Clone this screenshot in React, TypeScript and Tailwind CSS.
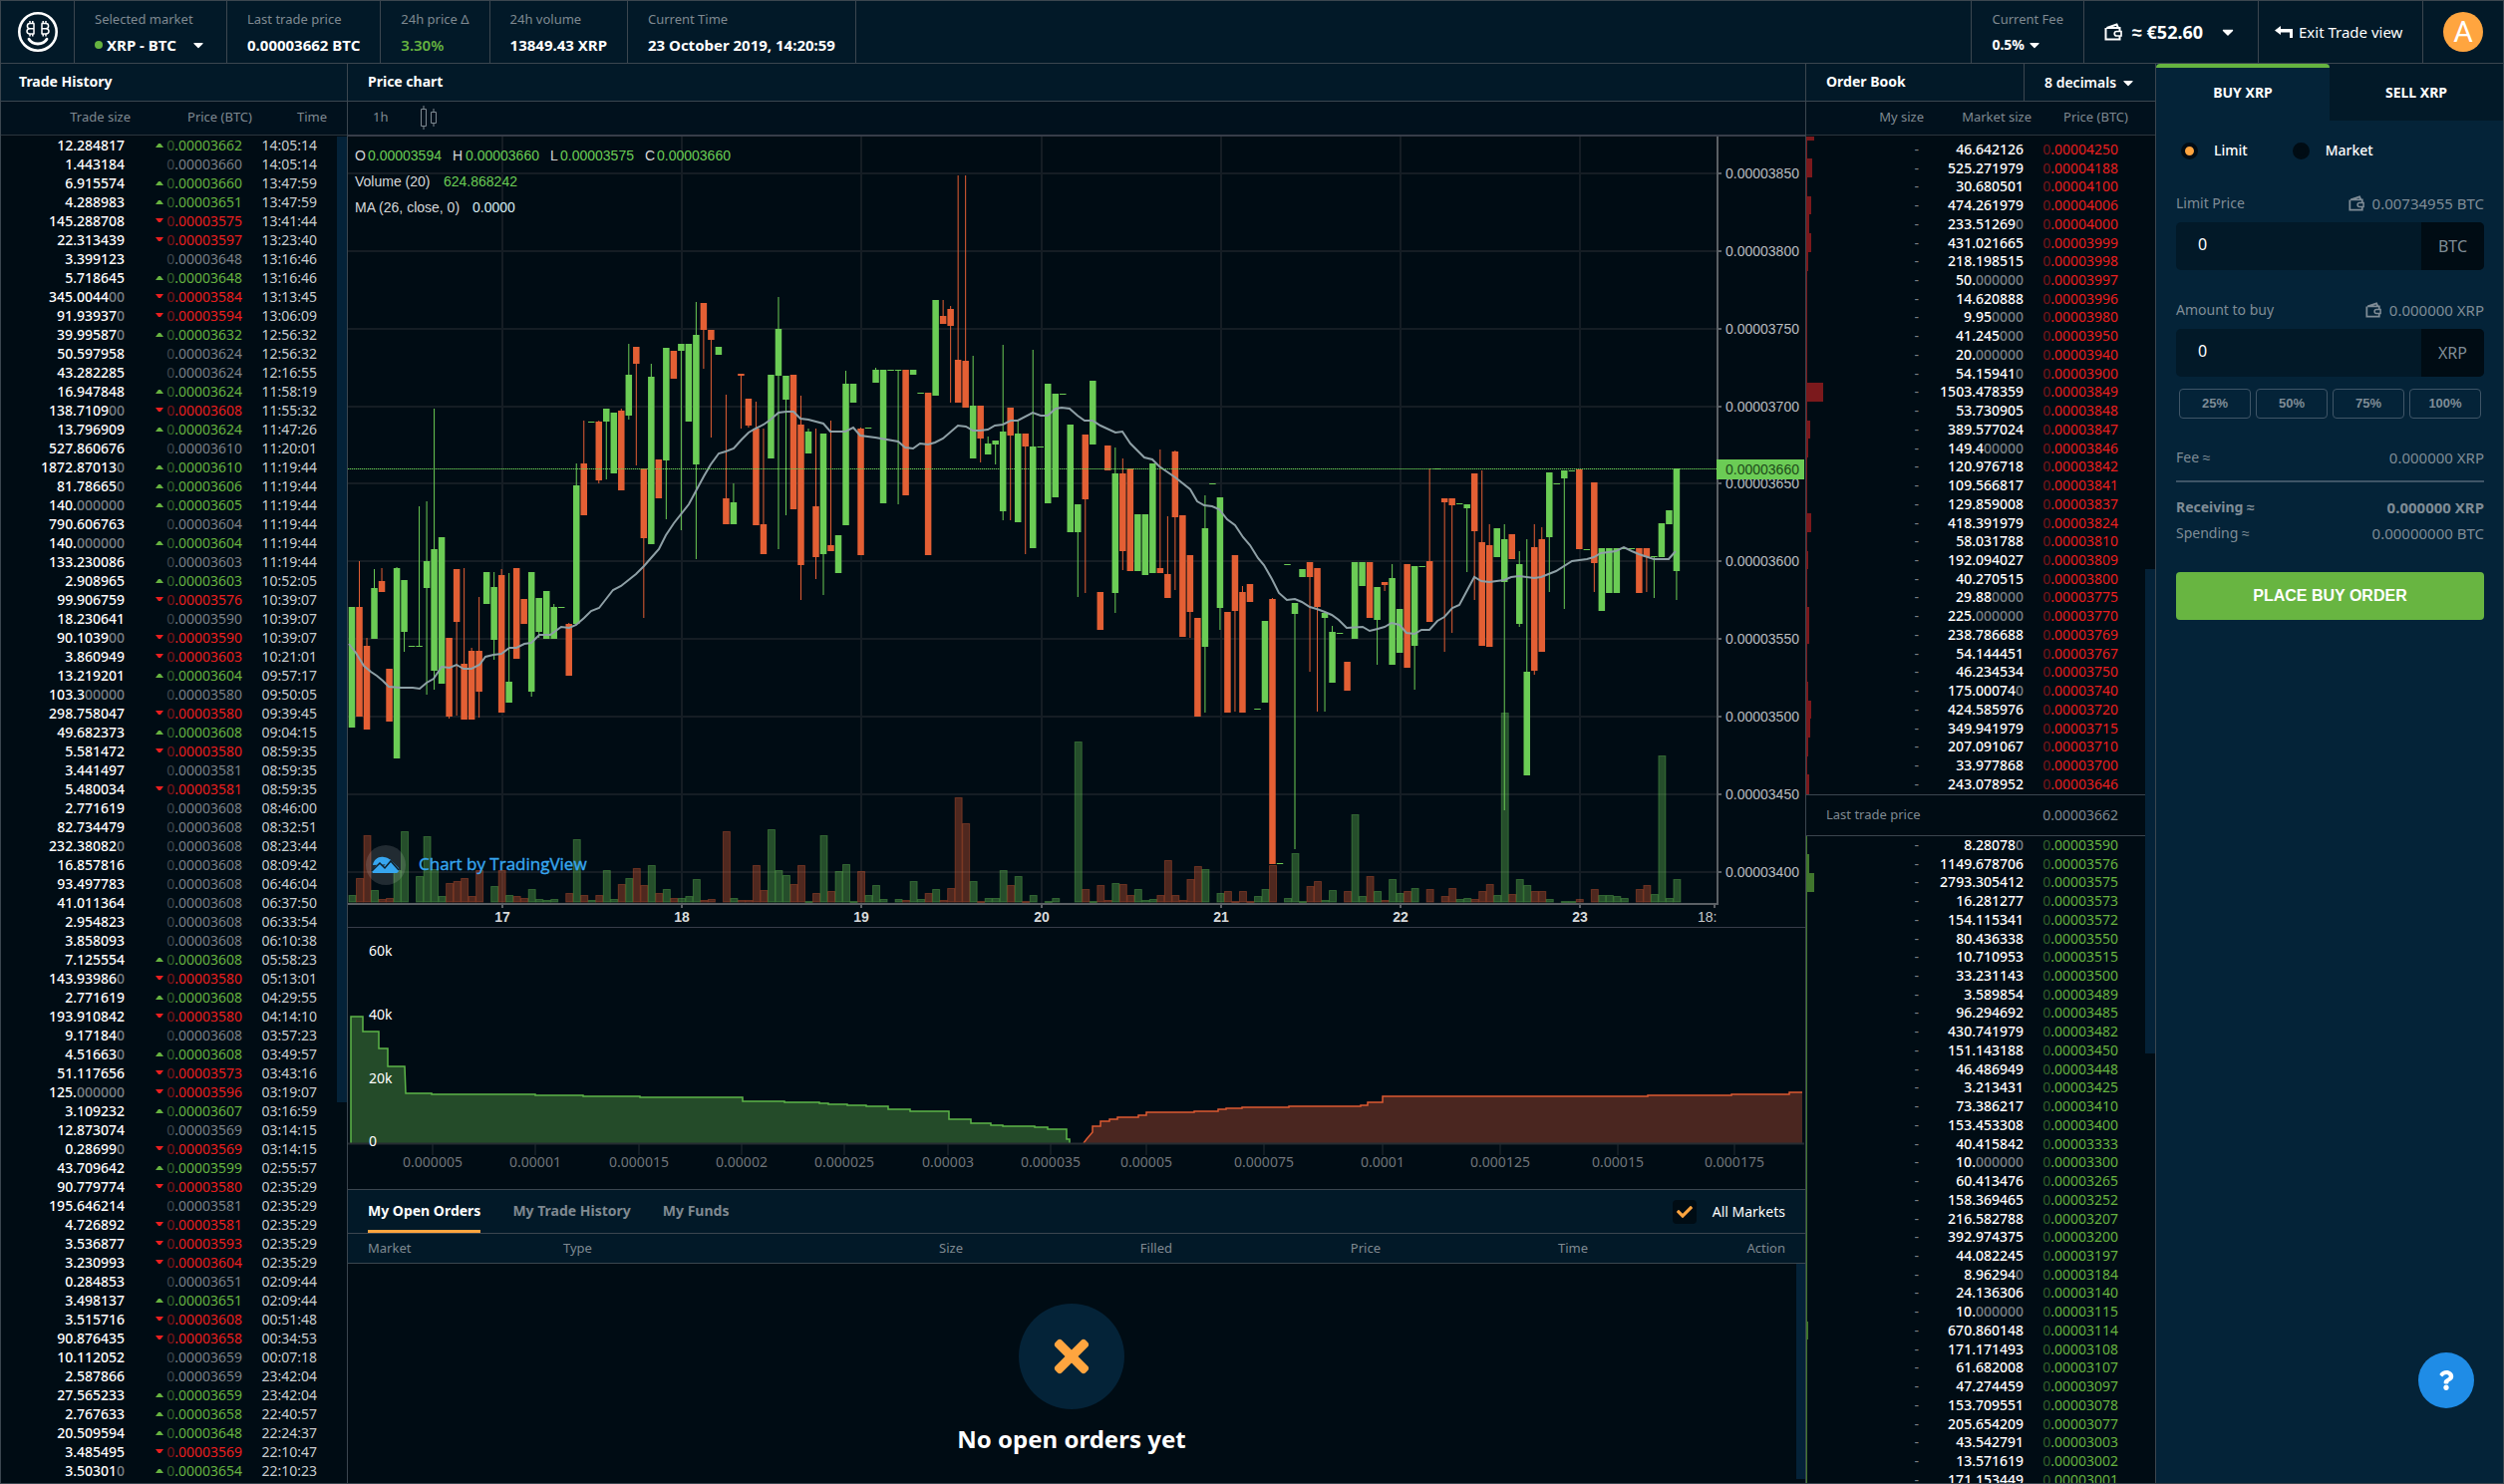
import { FaCaretDown, FaCheck, FaQuestion, FaTimes } from 'react-icons/fa';

type Direction = 'up' | 'down' | 'same';

// size, last digits of the price, time, direction
const trades: [string, string, string, Direction][] = [
  ['12.284817', '3662', '14:05:14', 'up'],
  ['1.443184', '3660', '14:05:14', 'same'],
  ['6.915574', '3660', '13:47:59', 'up'],
  ['4.288983', '3651', '13:47:59', 'up'],
  ['145.288708', '3575', '13:41:44', 'down'],
  ['22.313439', '3597', '13:23:40', 'down'],
  ['3.399123', '3648', '13:16:46', 'same'],
  ['5.718645', '3648', '13:16:46', 'up'],
  ['345.004400', '3584', '13:13:45', 'down'],
  ['91.939370', '3594', '13:06:09', 'down'],
  ['39.995870', '3632', '12:56:32', 'up'],
  ['50.597958', '3624', '12:56:32', 'same'],
  ['43.282285', '3624', '12:16:55', 'same'],
  ['16.947848', '3624', '11:58:19', 'up'],
  ['138.710900', '3608', '11:55:32', 'down'],
  ['13.796909', '3624', '11:47:26', 'up'],
  ['527.860676', '3610', '11:20:01', 'same'],
  ['1872.870130', '3610', '11:19:44', 'up'],
  ['81.786650', '3606', '11:19:44', 'up'],
  ['140.000000', '3605', '11:19:44', 'up'],
  ['790.606763', '3604', '11:19:44', 'same'],
  ['140.000000', '3604', '11:19:44', 'up'],
  ['133.230086', '3603', '11:19:44', 'same'],
  ['2.908965', '3603', '10:52:05', 'up'],
  ['99.906759', '3576', '10:39:07', 'down'],
  ['18.230641', '3590', '10:39:07', 'same'],
  ['90.103900', '3590', '10:39:07', 'down'],
  ['3.860949', '3603', '10:21:01', 'down'],
  ['13.219201', '3604', '09:57:17', 'up'],
  ['103.300000', '3580', '09:50:05', 'same'],
  ['298.758047', '3580', '09:39:45', 'down'],
  ['49.682373', '3608', '09:04:15', 'up'],
  ['5.581472', '3580', '08:59:35', 'down'],
  ['3.441497', '3581', '08:59:35', 'same'],
  ['5.480034', '3581', '08:59:35', 'down'],
  ['2.771619', '3608', '08:46:00', 'same'],
  ['82.734479', '3608', '08:32:51', 'same'],
  ['232.380820', '3608', '08:23:44', 'same'],
  ['16.857816', '3608', '08:09:42', 'same'],
  ['93.497783', '3608', '06:46:04', 'same'],
  ['41.011364', '3608', '06:37:50', 'same'],
  ['2.954823', '3608', '06:33:54', 'same'],
  ['3.858093', '3608', '06:10:38', 'same'],
  ['7.125554', '3608', '05:58:23', 'up'],
  ['143.939860', '3580', '05:13:01', 'down'],
  ['2.771619', '3608', '04:29:55', 'up'],
  ['193.910842', '3580', '04:14:10', 'down'],
  ['9.171840', '3608', '03:57:23', 'same'],
  ['4.516630', '3608', '03:49:57', 'up'],
  ['51.117656', '3573', '03:43:16', 'down'],
  ['125.000000', '3596', '03:19:07', 'down'],
  ['3.109232', '3607', '03:16:59', 'up'],
  ['12.873074', '3569', '03:14:15', 'same'],
  ['0.286990', '3569', '03:14:15', 'down'],
  ['43.709642', '3599', '02:55:57', 'up'],
  ['90.779774', '3580', '02:35:29', 'down'],
  ['195.646214', '3581', '02:35:29', 'same'],
  ['4.726892', '3581', '02:35:29', 'down'],
  ['3.536877', '3593', '02:35:29', 'down'],
  ['3.230993', '3604', '02:35:29', 'down'],
  ['0.284853', '3651', '02:09:44', 'same'],
  ['3.498137', '3651', '02:09:44', 'up'],
  ['3.515716', '3608', '00:51:48', 'down'],
  ['90.876435', '3658', '00:34:53', 'down'],
  ['10.112052', '3659', '00:07:18', 'same'],
  ['2.587866', '3659', '23:42:04', 'same'],
  ['27.565233', '3659', '23:42:04', 'up'],
  ['2.767633', '3658', '22:40:57', 'up'],
  ['20.509594', '3648', '22:24:37', 'up'],
  ['3.485495', '3569', '22:10:47', 'down'],
  ['3.503010', '3654', '22:10:23', 'up'],
];

const asks: [string, string][] = [
  ['46.642126', '4250'], ['525.271979', '4188'], ['30.680501', '4100'], ['474.261979', '4006'],
  ['233.512690', '4000'], ['431.021665', '3999'], ['218.198515', '3998'], ['50.000000', '3997'],
  ['14.620888', '3996'], ['9.950000', '3980'], ['41.245000', '3950'], ['20.000000', '3940'],
  ['54.159410', '3900'], ['1503.478359', '3849'], ['53.730905', '3848'], ['389.577024', '3847'],
  ['149.400000', '3846'], ['120.976718', '3842'], ['109.566817', '3841'], ['129.859008', '3837'],
  ['418.391979', '3824'], ['58.031788', '3810'], ['192.094027', '3809'], ['40.270515', '3800'],
  ['29.880000', '3775'], ['225.000000', '3770'], ['238.786688', '3769'], ['54.144451', '3767'],
  ['46.234534', '3750'], ['175.000740', '3740'], ['424.585976', '3720'], ['349.941979', '3715'],
  ['207.091067', '3710'], ['33.977868', '3700'], ['243.078952', '3646'],
];

const bids: [string, string][] = [
  ['8.280780', '3590'], ['1149.678706', '3576'], ['2793.305412', '3575'], ['16.281277', '3573'],
  ['154.115341', '3572'], ['80.436338', '3550'], ['10.710953', '3515'], ['33.231143', '3500'],
  ['3.589854', '3489'], ['96.294692', '3485'], ['430.741979', '3482'], ['151.143188', '3450'],
  ['46.486949', '3448'], ['3.213431', '3425'], ['73.386217', '3410'], ['153.453308', '3400'],
  ['40.415842', '3333'], ['10.000000', '3300'], ['60.413476', '3265'], ['158.369465', '3252'],
  ['216.582788', '3207'], ['392.974375', '3200'], ['44.082245', '3197'], ['8.962940', '3184'],
  ['24.136306', '3140'], ['10.000000', '3115'], ['670.860148', '3114'], ['171.171493', '3108'],
  ['61.682008', '3107'], ['47.274459', '3097'], ['153.709551', '3078'], ['205.654209', '3077'],
  ['43.542791', '3003'], ['13.571619', '3002'], ['171.153449', '3001'],
];

// One candle per hour: up (1) or down (0), high, body top, body bottom, low, volume top.
// A volume of 0 means nothing traded in that hour.
const candles: [number, number, number, number, number, number][] = [
  [1, 609, 609, 730, 730, 898], [0, 563, 609, 719, 719, 881], [0, 640, 648, 732, 732, 838],
  [1, 571, 590, 641, 641, 893], [0, 570, 583, 594, 594, 902], [0, 671, 671, 724, 724, 901],
  [1, 569, 570, 761, 761, 873], [1, 582, 582, 634, 654, 834], [1, 648, 648, 648, 648, 0],
  [1, 508, 648, 648, 648, 879], [1, 503, 563, 590, 697, 839], [1, 410, 551, 673, 692, 872],
  [1, 539, 539, 686, 686, 899], [0, 640, 640, 719, 721, 886], [0, 571, 571, 624, 718, 884],
  [0, 570, 666, 722, 722, 881], [0, 650, 653, 722, 722, 899], [0, 599, 653, 694, 720, 873],
  [1, 574, 574, 606, 606, 0], [1, 574, 589, 642, 662, 889], [0, 571, 577, 715, 715, 873],
  [1, 575, 684, 705, 705, 898], [0, 570, 570, 661, 661, 899], [0, 601, 601, 626, 626, 901],
  [1, 574, 574, 694, 699, 892], [1, 600, 600, 634, 640, 902], [1, 593, 593, 641, 641, 903],
  [1, 606, 609, 641, 641, 902], [1, 609, 609, 609, 609, 0], [0, 625, 626, 678, 678, 896],
  [1, 465, 487, 626, 626, 842], [0, 422, 465, 517, 517, 898], [1, 423, 423, 423, 423, 903],
  [0, 422, 423, 482, 485, 898], [1, 410, 410, 423, 481, 873], [1, 414, 414, 475, 475, 902],
  [0, 410, 412, 492, 492, 887], [1, 345, 376, 417, 421, 881], [0, 348, 348, 365, 467, 871],
  [0, 470, 470, 540, 620, 888], [1, 365, 378, 546, 546, 868], [0, 461, 461, 500, 500, 896],
  [1, 349, 349, 462, 521, 892], [0, 352, 352, 380, 380, 901], [1, 345, 345, 352, 532, 901],
  [1, 345, 345, 423, 423, 899], [1, 303, 336, 466, 561, 882], [0, 304, 304, 331, 370, 903],
  [0, 331, 331, 341, 439, 902], [1, 348, 348, 356, 356, 0], [0, 396, 500, 526, 526, 834],
  [1, 485, 504, 526, 526, 901], [0, 375, 375, 377, 430, 903], [0, 400, 400, 427, 429, 903],
  [0, 403, 430, 527, 527, 868], [0, 430, 526, 556, 556, 893], [1, 376, 376, 460, 460, 832],
  [1, 298, 330, 377, 551, 873], [1, 377, 377, 401, 517, 878], [0, 376, 376, 511, 511, 887],
  [0, 397, 426, 567, 602, 868], [1, 430, 433, 455, 455, 904], [0, 430, 508, 559, 581, 896],
  [1, 435, 435, 556, 597, 838], [0, 422, 547, 553, 553, 894], [1, 537, 537, 575, 575, 874],
  [1, 372, 385, 527, 527, 867], [1, 385, 385, 404, 404, 904], [0, 429, 430, 557, 557, 874],
  [1, 429, 429, 429, 429, 898], [1, 369, 371, 384, 384, 888], [1, 371, 371, 505, 505, 902],
  [1, 371, 371, 371, 371, 0], [1, 371, 371, 371, 506, 902], [0, 371, 371, 497, 497, 903],
  [1, 371, 371, 376, 376, 884], [1, 394, 394, 394, 394, 902], [0, 394, 394, 557, 557, 896],
  [1, 301, 301, 397, 397, 892], [0, 301, 317, 325, 325, 903], [0, 307, 310, 327, 404, 891],
  [0, 176, 361, 404, 404, 800], [0, 176, 362, 409, 409, 826], [1, 357, 407, 460, 460, 884],
  [0, 407, 407, 440, 464, 904], [1, 438, 445, 456, 456, 901], [1, 442, 442, 446, 466, 901],
  [1, 346, 433, 513, 522, 873], [0, 409, 409, 437, 522, 888], [1, 421, 435, 524, 524, 879],
  [0, 435, 435, 448, 556, 904], [1, 351, 448, 550, 550, 898], [1, 448, 448, 448, 448, 0],
  [1, 385, 385, 505, 505, 904], [1, 395, 395, 499, 499, 901], [1, 395, 395, 395, 395, 0],
  [1, 426, 426, 534, 534, 0], [1, 506, 506, 534, 599, 744], [0, 436, 436, 501, 595, 892],
  [1, 382, 382, 446, 446, 904], [0, 594, 594, 632, 632, 888], [0, 447, 447, 472, 472, 903],
  [1, 449, 475, 595, 615, 886], [0, 460, 475, 553, 572, 887], [0, 470, 470, 573, 573, 898],
  [1, 516, 516, 573, 573, 892], [1, 516, 516, 577, 577, 903], [1, 465, 465, 575, 575, 902],
  [0, 451, 570, 575, 575, 898], [0, 518, 576, 600, 600, 863], [0, 452, 453, 519, 592, 898],
  [0, 517, 517, 639, 639, 903], [0, 557, 557, 614, 640, 882], [0, 620, 620, 719, 719, 869],
  [1, 497, 530, 649, 715, 872], [1, 485, 485, 485, 485, 0], [1, 499, 499, 610, 632, 896],
  [0, 614, 614, 715, 715, 894], [0, 557, 557, 613, 714, 904], [0, 588, 594, 715, 715, 894],
  [0, 586, 586, 604, 604, 904], [1, 711, 711, 711, 711, 899], [1, 623, 623, 705, 705, 892],
  [0, 600, 601, 867, 867, 868], [1, 866, 866, 866, 866, 0], [1, 566, 566, 566, 566, 901],
  [1, 605, 605, 616, 852, 856], [1, 571, 571, 579, 579, 904], [0, 564, 564, 579, 674, 889],
  [0, 570, 570, 609, 714, 884], [1, 615, 615, 620, 714, 903], [1, 628, 634, 685, 685, 893],
  [1, 635, 635, 635, 635, 0], [0, 664, 664, 693, 693, 894], [1, 564, 564, 641, 641, 817],
  [1, 564, 564, 588, 588, 899], [0, 564, 564, 620, 620, 879], [1, 589, 589, 622, 667, 894],
  [0, 584, 584, 587, 593, 903], [1, 566, 580, 667, 667, 882], [1, 611, 611, 655, 655, 896],
  [0, 566, 566, 670, 670, 894], [1, 568, 568, 648, 692, 891], [1, 568, 568, 568, 568, 0],
  [0, 470, 563, 624, 624, 892], [1, 470, 470, 470, 470, 0], [0, 500, 500, 504, 654, 899],
  [0, 500, 500, 507, 635, 891], [1, 505, 505, 505, 505, 902], [1, 506, 506, 510, 574, 901],
  [0, 475, 475, 533, 602, 902], [0, 472, 544, 648, 648, 894], [0, 526, 547, 649, 649, 887],
  [1, 530, 530, 559, 559, 898], [1, 526, 541, 584, 813, 715], [0, 536, 536, 561, 561, 897],
  [1, 553, 566, 626, 629, 882], [1, 541, 674, 778, 778, 888], [0, 526, 549, 673, 677, 894],
  [0, 529, 541, 654, 654, 894], [1, 474, 474, 539, 594, 902], [1, 485, 485, 485, 485, 0],
  [1, 472, 472, 480, 611, 904], [1, 472, 472, 472, 472, 904], [0, 471, 471, 551, 551, 902],
  [1, 551, 551, 551, 551, 0], [0, 484, 484, 565, 594, 892], [1, 550, 550, 613, 613, 898],
  [1, 550, 550, 595, 595, 898], [1, 550, 550, 595, 595, 899], [1, 550, 550, 550, 550, 901],
  [1, 550, 550, 550, 550, 0], [0, 550, 550, 595, 595, 892], [0, 550, 550, 559, 594, 888],
  [1, 558, 558, 558, 600, 897], [1, 525, 525, 559, 559, 758], [1, 512, 512, 526, 526, 901],
  [1, 470, 470, 573, 602, 882],
];

const movingAverage =
  '350,646 353,650 357,655 365,668 372,674 378,678 384,683 390,689 402,690 414,690 421,691 428,685 435,681 443,669 451,670 458,667 465,671 473,671 481,667 487,659 495,657 503,656 511,650 518,650 526,646 533,645 541,637 552,637 563,629 571,630 578,627 586,620 593,613 601,610 608,601 615,592 623,588 638,576 646,568 653,560 661,551 668,537 676,525 691,506 706,478 713,466 721,455 728,453 736,450 744,441 751,434 758,430 766,426 773,421 781,414 789,413 796,413 803,420 811,421 826,425 833,433 848,433 856,429 863,437 878,439 901,443 908,449 916,450 923,445 931,446 938,444 946,440 961,427 969,428 976,432 983,432 991,431 998,427 1006,426 1014,422 1021,422 1036,414 1044,417 1051,417 1059,410 1065,409 1073,410 1081,417 1088,422 1096,422 1104,427 1119,434 1126,433 1134,445 1148,459 1156,461 1163,468 1179,479 1194,491 1201,503 1208,507 1216,508 1223,511 1231,521 1239,527 1247,539 1254,547 1262,560 1268,567 1276,581 1283,595 1291,602 1299,601 1306,604 1314,609 1321,611 1329,614 1336,617 1343,622 1351,630 1367,629 1374,633 1382,631 1389,629 1396,625 1404,627 1411,635 1419,636 1426,632 1434,632 1442,623 1449,619 1457,610 1464,607 1479,579 1486,583 1494,584 1509,582 1516,579 1524,578 1539,580 1546,579 1561,573 1577,563 1592,561 1599,559 1606,555 1621,553 1629,549 1637,553 1644,556 1659,561 1674,561 1681,553';

const priceTicks = [3850, 3800, 3750, 3700, 3650, 3600, 3550, 3500, 3450, 3400];
const dayTicks = [17, 18, 19, 20, 21, 22, 23];

const bidDepth =
  'M352 1147V1020H364V1035H380V1052H389V1070H406L407 1097H433V1098H537V1099H585V1100H642V1101H745V1105H787V1106H822V1107H831V1108H850V1109H869V1110H891V1113H913V1115H952V1123H974V1127H994V1129H1006V1130H1038V1131H1051V1133H1070V1143H1073V1147';
const askDepth =
  'M1087 1147L1090 1143L1096 1136V1130H1104V1125H1113V1123H1121V1121H1142V1119H1150V1116H1198V1115H1222V1113H1230V1112H1246V1111H1293V1110H1365V1109H1372V1106H1387V1100H1653V1099H1737V1098H1795V1096H1808';

const depthTicks: [number, string][] = [
  [434, '0.000005'], [537, '0.00001'], [641, '0.000015'], [744, '0.00002'], [847, '0.000025'],
  [951, '0.00003'], [1054, '0.000035'], [1150, '0.00005'], [1268, '0.000075'], [1387, '0.0001'],
  [1505, '0.000125'], [1623, '0.00015'], [1740, '0.000175'],
];

const directionColor = {
  up: 'text-[#66b340]',
  down: 'text-[#ea1f1f]',
  same: 'text-[#7a8086]',
};

const Size = ({ value }: { value: string }) => {
  const zeros = value.match(/0*$/)?.[0] ?? '';
  return (
    <>
      {value.slice(0, value.length - zeros.length)}
      <span className="text-[#7a8086]">{zeros}</span>
    </>
  );
};

const Price = ({ digits }: { digits: string }) => (
  <>
    <span className="opacity-50">0</span>.0000{digits}
  </>
);

const Logo = () => (
  <svg viewBox="0 0 42 42" className="h-[42px] w-[42px]" fill="none" stroke="#fff">
    <circle cx="21" cy="21" r="18.7" strokeWidth="2.6" />
    <path d="M12 28.300c2 3.400 5 4.700 9 4.700s7-1.300 9-4.700" strokeWidth="2.800" strokeLinecap="round" />
    <path
      d="M17 12.500v10.500M17.500 12.500h-4.500c-3.500 0-3.500 5.200 0 5.200h4M13 17.700c-4 0-4 5.300 0 5.300h4.500M13 10v2.500M15.800 10v2.500M13 23v2.500M15.800 23v2.500"
      strokeWidth="1.500"
    />
    <path
      d="M25 12.500v10.500M24.500 12.500h4.500c3.500 0 3.500 5.200 0 5.200h-4M29 17.700c4 0 4 5.300 0 5.300h-4.500M26.200 10v2.500M29 10v2.500M26.200 23v2.500M29 23v2.500"
      strokeWidth="1.500"
    />
  </svg>
);

const Wallet = ({ className }: { className: string }) => (
  <svg viewBox="0 0 18 18" className={className} fill="none" stroke="currentColor" strokeWidth="2">
    <path d="M15.500 8V5H2.500L12.500 1.500L14 5M15.500 13v3.500H1.500V5" />
    <path d="M17 8.500v4.500h-4.500a2.250 2.250 0 0 1 0-4.500z" strokeWidth="1.700" />
  </svg>
);

const Stat = ({ label, children }: { label: string; children: React.ReactNode }) => (
  <div className="flex flex-col justify-center gap-[6px] border-r border-[#3b464f] px-5 text-[15px] leading-5 font-bold">
    <span className="text-[13px] font-normal text-[#7f8991]">{label}</span>
    {children}
  </div>
);

const Header = () => (
  <header className="flex h-[63px] shrink-0 border-b border-[#3b464f] bg-[#021928]">
    <a href="#home" aria-label="Home" className="flex w-[74px] items-center justify-center border-r border-[#3b464f]">
      <Logo />
    </a>
    <Stat label="Selected market">
      <button type="button" className="flex w-28 items-center">
        <span className="mr-1 h-2 w-2 rounded-full bg-[#66b340]" />
        XRP - BTC
        <FaCaretDown className="ml-auto h-4 w-4" />
      </button>
    </Stat>
    <Stat label="Last trade price">
      <span>0.00003662 BTC</span>
    </Stat>
    <Stat label="24h price Δ">
      <span className="font-semibold text-[#66b340]">3.30%</span>
    </Stat>
    <Stat label="24h volume">
      <span>13849.43 XRP</span>
    </Stat>
    <Stat label="Current Time">
      <span>23 October 2019, 14:20:59</span>
    </Stat>
    <div className="ml-auto flex border-l border-[#3b464f]">
      <Stat label="Current Fee">
        <button type="button" className="flex items-center gap-[2px] text-sm leading-5">
          0.5%
          <FaCaretDown className="h-4 w-4" />
        </button>
      </Stat>
      <button
        type="button"
        className="flex w-[175px] items-center border-r border-[#3b464f] pl-5 text-lg font-bold"
      >
        <Wallet className="mr-[10px] h-[18px] w-[18px]" />≈ €52.60
        <FaCaretDown className="ml-4 h-[18px] w-[18px]" />
      </button>
      <a href="#exit" className="flex w-[165px] items-center gap-[6px] border-r border-[#3b464f] pl-4 text-[15px]">
        <svg viewBox="0 0 18 14" className="h-[14px] w-[18px]" fill="currentColor">
          <path d="M0 5.500L6 1v3h12v9h-3V7.500H6V10z" />
        </svg>
        Exit Trade view
      </a>
      <button
        type="button"
        aria-label="Account"
        className="mx-5 h-10 w-10 self-center rounded-full bg-[#ffa53f] font-['Roboto',sans-serif] text-[30px] leading-10"
      >
        A
      </button>
    </div>
  </header>
);

const TradeHistory = () => (
  <section className="relative overflow-hidden border-r border-[#3b464f]">
    <h2 className="flex h-[38px] items-center border-b border-[#3b464f] bg-[#021928] pb-[2px] pl-[18px] text-sm font-bold">
      Trade History
    </h2>
    <table className="w-full table-fixed text-right text-sm leading-[19px]">
      <colgroup>
        <col className="w-[130px]" />
        <col className="w-[122px]" />
        <col className="w-[75px]" />
        <col />
      </colgroup>
      <thead className="bg-[#01111d] text-[13px] text-[#7f8991]">
        <tr className="h-[33px] border-b border-[#2b353d] *:pb-[2px] *:font-normal">
          <th>Trade size</th>
          <th>Price (BTC)</th>
          <th>Time</th>
          <th />
        </tr>
      </thead>
      <tbody>
        {trades.map(([size, price, time, direction], i) => (
          <tr key={i} className="h-[19px]">
            <td className="pr-[6px] font-medium">
              <Size value={size} />
            </td>
            <td className={`pr-[10px] ${directionColor[direction]}`}>
              <div className="flex h-[19px] items-center justify-end gap-[3px]">
                {direction !== 'same' && (
                  <svg viewBox="0 0 8 5" className="h-[5px] w-2" fill="currentColor">
                    <path d={direction === 'up' ? 'M0 5L3 1h2l3 4z' : 'M0 0h8L5 4H3z'} />
                  </svg>
                )}
                <span>
                  <Price digits={price} />
                </span>
              </div>
            </td>
            <td className="pr-[10px] text-[#c8cccf]">{time}</td>
            <td />
          </tr>
        ))}
      </tbody>
    </table>
    <div className="absolute top-[73px] right-0 h-[969px] w-[10px] bg-[#042238]" />
  </section>
);

const PriceChart = () => {
  const candleX = (i: number) => 353 + i * 7.508;
  const priceY = (price: number) => Math.round(174 + (3850 - price) * 1.557);

  return (
    <svg
      viewBox="349 137 1462 793"
      className="block w-full shrink-0 border-b border-[#373d49] font-['Liberation_Sans',Arial,sans-serif] text-sm"
    >
      <g stroke="#151d24" strokeWidth="2">
        {priceTicks.map((price) => (
          <path key={price} d={`M349 ${priceY(price)}H1722`} />
        ))}
        {dayTicks.map((day, i) => (
          <path key={day} d={`M${Math.round(504 + i * 180.2)} 137V906`} />
        ))}
      </g>

      {candles.map(([up, high, top, bottom, low], i) => {
        const x = candleX(i);
        const color = up ? '#6bcc55' : '#e35f34';
        return (
          <g key={i} fill={color}>
            {low > high && <rect x={x - 0.5} y={high} width="1" height={low - high} />}
            <rect x={x - 3.25} y={top} width="6.5" height={Math.max(1, bottom - top)} />
          </g>
        );
      })}

      <polyline points={movingAverage} fill="none" stroke="#8ea0a6" strokeWidth="2" />

      {candles.map(([up, , , , , volume], i) => {
        if (!volume) return null;
        const color = up ? '#6bcc55' : '#e35f34';
        return (
          <rect
            key={i}
            x={candleX(i) - 3}
            y={volume + 0.5}
            width="7"
            height={Math.max(1, 904.5 - volume)}
            fill={color}
            fillOpacity="0.35"
            stroke={color}
            strokeOpacity="0.35"
          />
        );
      })}

      <path d="M349 470.5H1722" stroke="#6bcc55" strokeOpacity="0.3" />
      <path d="M349 470.5H1722" stroke="#6bcc55" strokeDasharray="1 1" />

      <g stroke="#5b6065" strokeWidth="2">
        <path d="M349 907H1723V137" fill="none" />
        {priceTicks.map((price) => (
          <path key={price} d={`M1723 ${priceY(price)}h4`} />
        ))}
        {dayTicks.map((day, i) => (
          <path key={day} d={`M${Math.round(504 + i * 180.2)} 907v4`} />
        ))}
        <path d="M1720 907v4" />
      </g>

      <g fill="#b9bdc0">
        {priceTicks.map((price) => (
          <text key={price} x="1731" y={priceY(price) + 5}>
            0.0000{price}
          </text>
        ))}
      </g>
      <rect x="1722" y="461" width="88" height="20" fill="#6bcc55" />
      <text x="1731" y="476" fill="#1d4a1a">
        0.00003660
      </text>
      <g fill="#d7dadb" fontWeight="bold" textAnchor="middle">
        {dayTicks.map((day, i) => (
          <text key={day} x={Math.round(504 + i * 180.2)} y="925">
            {day}
          </text>
        ))}
      </g>
      <text x="1703" y="925" fill="#c5c9cb">
        18:
      </text>

      <g fill="#d5d8da">
        <text x="356" y="161">O</text>
        <text x="454" y="161">H</text>
        <text x="552" y="161">L</text>
        <text x="647" y="161">C</text>
        <text x="356" y="187">Volume (20)</text>
        <text x="356" y="213">MA (26, close, 0)</text>
      </g>
      <g fill="#6bcc55">
        <text x="369" y="161">0.00003594</text>
        <text x="467" y="161">0.00003660</text>
        <text x="562" y="161">0.00003575</text>
        <text x="659" y="161">0.00003660</text>
        <text x="445" y="187">624.868242</text>
      </g>
      <text x="474" y="213" fill="#d6eef5">
        0.0000
      </text>

      <circle cx="387" cy="868" r="20" fill="#fff" fillOpacity="0.13" />
      <path d="M373 874l7-9 5 4 6-7 9 9c1 3-1 5-3 5h-23z" fill="#37a6ef" />
      <path d="M374 868c1-6 6-9 11-8 5 0 8 4 9 7" fill="#37a6ef" />
      <path d="M373 874l8-8 5 5 6-7 8 9" fill="none" stroke="#10202b" strokeWidth="1.5" />
      <text
        x="420"
        y="873"
        fontSize="17"
        fill="#37a6ef"
        stroke="#37a6ef"
        strokeWidth="0.4"
        className="font-['Open_Sans',sans-serif]"
      >
        Chart by TradingView
      </text>
    </svg>
  );
};

const DepthChart = () => (
  <svg viewBox="349 931 1462 262" className="block w-full shrink-0 text-sm">
    <path d={bidDepth} fill="#244b29" />
    <path d={bidDepth} fill="none" stroke="#5cb548" strokeWidth="1.500" />
    <path d={`${askDepth}V1147H1087z`} fill="#4a2620" />
    <path d={askDepth} fill="none" stroke="#dd5a31" strokeWidth="1.500" />
    <path d="M349 1147.500H1810" stroke="#252c32" strokeWidth="2" />
    <g fill="#fff">
      <text x="370" y="959">60k</text>
      <text x="370" y="1023">40k</text>
      <text x="370" y="1087">20k</text>
      <text x="370" y="1150">0</text>
    </g>
    {depthTicks.map(([x, label]) => (
      <g key={label}>
        <path d={`M${x} 1147v12`} stroke="#252c32" />
        <text x={x} y="1171" textAnchor="middle" fill="#70757a">
          {label}
        </text>
      </g>
    ))}
  </svg>
);

const OpenOrders = () => (
  <section className="relative flex min-h-0 flex-1 flex-col">
    <div className="flex h-[45px] shrink-0 items-center border-y border-[#3b464f] bg-[#021928] px-5 text-sm">
      <nav className="flex gap-8 self-stretch font-bold text-[#7f8991] *:flex *:items-center *:border-b-[3px] *:pt-[2px]">
        <a href="#orders" className="border-[#ffa53f] text-white">
          My Open Orders
        </a>
        <a href="#trades" className="border-transparent">
          My Trade History
        </a>
        <a href="#funds" className="border-transparent">
          My Funds
        </a>
      </nav>
      <label className="relative ml-auto flex items-center gap-4">
        <input type="checkbox" defaultChecked className="peer h-6 w-6 appearance-none rounded bg-[#000c14]" />
        <FaCheck className="absolute left-1 hidden h-4 w-4 text-[#ffa53f] peer-checked:block" />
        All Markets
      </label>
    </div>
    <table className="w-full table-fixed text-right text-[13px] text-[#7f8991]">
      <thead>
        <tr className="h-[29px] border-b border-[#3b464f] bg-[#021928] *:font-normal">
          <th className="w-[216px] pl-5 text-left">Market</th>
          <th className="w-[192px] text-left">Type</th>
          <th className="w-[209px]">Size</th>
          <th className="w-[210px]">Filled</th>
          <th className="w-[209px]">Price</th>
          <th className="w-[208px]">Time</th>
          <th className="pr-5">Action</th>
        </tr>
      </thead>
    </table>
    <div className="flex flex-1 flex-col items-center pt-10 pr-[10px]">
      <div className="flex h-[106px] w-[106px] items-center justify-center rounded-full bg-[#042338]">
        <FaTimes className="h-[50px] w-[50px] text-[#ffa53f]" />
      </div>
      <p className="mt-3 text-2xl leading-9 font-bold">No open orders yet</p>
    </div>
    <div className="absolute right-0 bottom-1 h-[216px] w-[9px] bg-[#042238]" />
  </section>
);

const BookRows = ({ rows, side }: { rows: [string, string][]; side: 'ask' | 'bid' }) => (
  <tbody>
    {rows.map(([size, price]) => (
      <tr key={price}>
        <td className="relative">
          <div
            className={side === 'ask' ? 'absolute inset-y-0 left-0 bg-[#7b191c]' : 'absolute inset-y-0 left-0 bg-[#40762d]'}
            style={{ width: Math.max(1, Math.round(Number(size) / (side === 'ask' ? 90 : 350))) }}
          />
        </td>
        <td className="pr-[5px] text-[#7a8086]">-</td>
        <td className="pr-2 font-medium">
          <Size value={size} />
        </td>
        <td className={side === 'ask' ? 'pr-[10px] text-[#ea1f1f]' : 'pr-[10px] text-[#66b340]'}>
          <Price digits={price} />
        </td>
        <td />
      </tr>
    ))}
  </tbody>
);

const BookColumns = () => (
  <colgroup>
    <col className="w-[30px]" />
    <col className="w-[88px]" />
    <col className="w-[108px]" />
    <col className="w-[97px]" />
    <col />
  </colgroup>
);

const OrderBook = () => (
  <section className="relative flex min-h-0 flex-col overflow-hidden border-r border-[#3b464f]">
    <div className="flex h-[38px] shrink-0 border-b border-[#3b464f] bg-[#021928] text-sm font-semibold">
      <h2 className="flex flex-1 items-center pb-[2px] pl-5 font-bold">Order Book</h2>
      <button type="button" className="flex w-[132px] items-center gap-1 border-l border-[#3b464f] pl-5">
        8 decimals
        <FaCaretDown className="h-4 w-4" />
      </button>
    </div>
    <table className="w-full shrink-0 table-fixed text-right text-[13px] text-[#7f8991]">
      <BookColumns />
      <thead>
        <tr className="h-[33px] border-b border-[#2b353d] bg-[#01111d] *:pb-[2px] *:font-normal">
          <th />
          <th>My size</th>
          <th>Market size</th>
          <th>Price (BTC)</th>
          <th />
        </tr>
      </thead>
    </table>
    <div className="mt-px h-1 w-2 shrink-0 bg-[#7b191c]" />
    <table className="h-[656px] w-full shrink-0 table-fixed text-right text-sm leading-[18px]">
      <BookColumns />
      <BookRows rows={asks} side="ask" />
    </table>
    <div className="mr-[10px] flex h-[42px] shrink-0 items-center justify-between border-y border-[#3b464f] pr-[27px] pl-5 text-sm text-[#7f8991]">
      <span className="text-[13px]">Last trade price</span>
      <span>0.00003662</span>
    </div>
    <table className="h-[656px] w-full shrink-0 table-fixed text-right text-sm leading-[18px]">
      <BookColumns />
      <BookRows rows={bids} side="bid" />
    </table>
    <div className="absolute top-[507px] right-0 h-[486px] w-[10px] bg-[#042238]" />
  </section>
);

interface AmountFieldProps {
  id: string;
  label: string;
  balance: string;
  unit: string;
}

const AmountField = ({ id, label, balance, unit }: AmountFieldProps) => (
  <div>
    <div className="flex h-6 items-center text-[15px]">
      <label htmlFor={id} className="mr-auto text-sm">
        {label}
      </label>
      <Wallet className="mr-2 h-4 w-4" />
      {balance}
    </div>
    <div className="mt-[7px] flex h-12 overflow-hidden rounded-[5px] bg-[#021928]">
      <input id={id} type="text" defaultValue="0" className="min-w-0 flex-1 px-[22px] pb-1 text-base text-white" />
      <span className="flex w-[63px] items-center justify-center bg-[#000c14] text-base">{unit}</span>
    </div>
  </div>
);

const OrderForm = () => (
  <section className="bg-[#042338]">
    <div className="grid h-[57px] grid-cols-2 text-sm font-bold">
      <button type="button" className="rounded-t border-t-4 border-[#66b340] pb-1">
        BUY XRP
      </button>
      <button type="button" className="bg-[#021928]">
        SELL XRP
      </button>
    </div>
    <form className="flex flex-col pr-[19px] pl-5 text-[#7f8c96]">
      <div className="mt-[18px] flex h-6 gap-10 text-sm font-medium text-white">
        {['Limit', 'Market'].map((type) => (
          <label key={type} className="flex items-center gap-4 pl-[5px]">
            <input
              type="radio"
              name="type"
              defaultChecked={type === 'Limit'}
              className="h-[17px] w-[17px] appearance-none rounded-full border-4 border-[#000c14] bg-[#000c14] checked:bg-[#ffa53f]"
            />
            {type}
          </label>
        ))}
      </div>
      <div className="mt-[29px] flex flex-col gap-7">
        <AmountField id="limit" label="Limit Price" balance="0.00734955 BTC" unit="BTC" />
        <AmountField id="amount" label="Amount to buy" balance="0.000000 XRP" unit="XRP" />
      </div>
      <div className="mx-[3px] mt-3 grid grid-cols-4 gap-[5px]">
        {['25%', '50%', '75%', '100%'].map((share) => (
          <button
            key={share}
            type="button"
            className="h-[30px] rounded border border-[#3f5567] font-['Liberation_Sans',Arial,sans-serif] text-[13px] font-bold"
          >
            {share}
          </button>
        ))}
      </div>
      <dl className="mt-[26px] text-sm leading-[26px] [&_dd]:text-[15px]">
        <div className="flex justify-between border-b-2 border-[#3f5567] pb-[10px]">
          <dt>Fee ≈</dt>
          <dd>0.000000 XRP</dd>
        </div>
        <div className="mt-3 flex justify-between font-bold">
          <dt>Receiving ≈</dt>
          <dd>0.000000 XRP</dd>
        </div>
        <div className="flex justify-between">
          <dt>Spending ≈</dt>
          <dd>0.00000000 BTC</dd>
        </div>
      </dl>
      <button
        type="submit"
        className="mt-[26px] h-12 rounded bg-[#68b541] font-['Liberation_Sans',Arial,sans-serif] text-base font-bold text-white"
      >
        PLACE BUY ORDER
      </button>
    </form>
  </section>
);

const App = () => {
  return (
    <div className="flex h-screen flex-col overflow-hidden border border-[#3b464f] bg-[#000c14] font-['Noto_Sans',sans-serif] text-white">
      <Header />
      <main className="grid min-h-0 flex-1 grid-cols-[348px_1fr_351px_348px]">
        <TradeHistory />
        <section className="flex min-h-0 min-w-0 flex-col border-r border-[#3b464f]">
          <h2 className="flex h-[38px] shrink-0 items-center border-b border-[#3b464f] bg-[#021928] pb-[2px] pl-5 text-sm font-bold">
            Price chart
          </h2>
          <div className="flex h-[35px] shrink-0 items-center gap-8 border-b-2 border-[#373d49] bg-[#01111d] pb-[2px] pl-[25px] text-[13px] text-[#7f8991]">
            <button type="button">1h</button>
            <button type="button" aria-label="Candles">
              <svg viewBox="0 0 18 24" className="h-6 w-[18px]" fill="none" stroke="currentColor">
                <path d="M1.500 3.500h5v17h-5zM4 0v3.500M4 20.500V24M11.500 6.500h5v11h-5zM14 3v3.500M14 17.500V21" />
              </svg>
            </button>
          </div>
          <PriceChart />
          <DepthChart />
          <OpenOrders />
        </section>
        <OrderBook />
        <OrderForm />
      </main>
      <button
        type="button"
        aria-label="Help"
        className="fixed right-[30px] bottom-[76px] flex h-14 w-14 items-center justify-center rounded-full bg-[#1f8ce6]"
      >
        <FaQuestion className="h-5 w-5" />
      </button>
    </div>
  );
};

export default App;
